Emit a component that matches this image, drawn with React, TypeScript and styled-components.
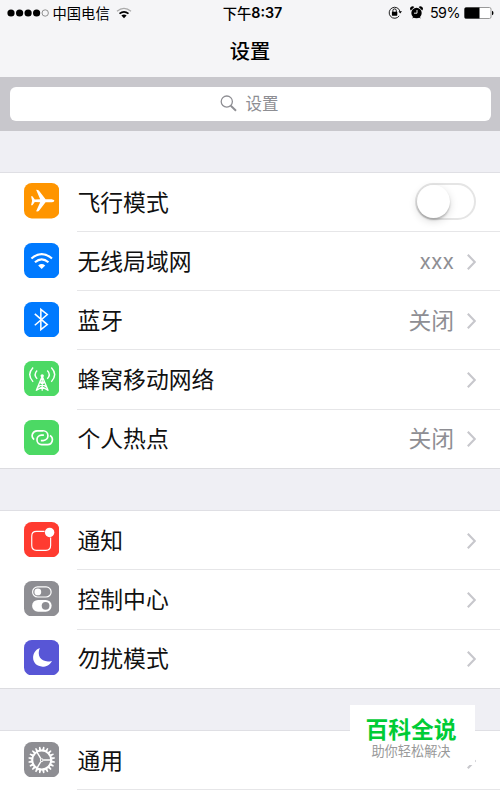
import React from "react";
import styled, { createGlobalStyle, css } from "styled-components";

const Global = createGlobalStyle`
  * { box-sizing: border-box; }
  html, body { margin: 0; padding: 0; }
  body { background: #efeff4; overflow: hidden; }
`;

const Screen = styled.main`
  position: relative;
  width: 500px;
  height: 790px;
  overflow: hidden;
  background: #efeff4;
  color: #111;
  font-family: "Noto Sans CJK SC", "Liberation Sans", sans-serif;
`;

const Header = styled.header`
  height: 77px;
  background: #f5f5f7;
`;

const StatusBar = styled.div`
  display: grid;
  grid-template-columns: 1fr auto 1fr;
  align-items: center;
  height: 25px;
  padding: 0 6px 0 7px;
  font-size: 14.3px;
  line-height: 25px;
  color: #000;
`;

const StatusSide = styled.div<{ $end?: boolean }>`
  display: flex;
  align-items: center;
  justify-content: ${(p) => (p.$end ? "flex-end" : "flex-start")};
  svg { display: block; flex: none; }
`;

const Carrier = styled.span`
  margin: 0 6px 0 3.5px;
`;

const Clock = styled.span`
  display: flex;
  padding-left: 4px;
  font-weight: 500;
`;

const Digits = styled.span`
  font-family: Inter, "Liberation Sans", sans-serif;
  font-weight: 600;
  font-size: 14.3px;
`;

const Indicators = styled.span`
  display: flex;
  align-items: center;
  gap: 8px;
`;

const Percent = styled.span`
  margin: 0 4px 0 7px;
  font-family: Inter, "Liberation Sans", sans-serif;
  font-size: 14.3px;
  letter-spacing: -0.5px;
`;

const Title = styled.h1`
  margin: 0;
  height: 51px;
  font-size: 20.3px;
  font-weight: 500;
  line-height: 51px;
  text-align: center;
  color: #000;
`;

const SearchBar = styled.div`
  height: 54px;
  padding: 10px 9.5px;
  background: #c8c7cc;
`;

const SearchField = styled.div`
  display: flex;
  align-items: center;
  justify-content: center;
  gap: 9px;
  height: 34px;
  padding: 0 2px 1px 0;
  border-radius: 6px;
  background: #fff;
  color: #8e8e93;
  font-size: 16.5px;
  line-height: 33px;
`;

const Group = styled.section<{ $gap: number }>`
  margin-top: ${(p) => p.$gap}px;
  background: #fff;
  box-shadow: 0 -1px 0 #dfdfe4;
`;

const Row = styled.div`
  display: flex;
  height: 59.15px;
  padding-left: 24px;
`;

const Tile = styled.svg`
  display: block;
  flex: none;
  width: 35.4px;
  height: 35.4px;
  margin: 10.4px 17.6px 0 0;
`;

const RowBody = styled.div<{ $last?: boolean }>`
  display: flex;
  flex: 1;
  align-items: center;
  padding: 0 24px 0 0.5px;
  border-bottom: 1px solid #e6e6e8;
  font-size: 22.8px;
  line-height: 34px;
  ${(p) =>
    p.$last &&
    css`
      border-bottom-color: #dcdce0;
      margin-left: -77px;
      padding-left: 77.5px;
    `}
`;

const Label = styled.span`
  flex: 1;
  margin-top: -1px;
`;

const Value = styled.span<{ $latin?: boolean }>`
  margin: -1px 13px 0 0;
  color: #8e8e93;
  ${(p) =>
    p.$latin &&
    css`
      font-family: Inter, "Liberation Sans", sans-serif;
      font-size: 21px;
      padding-top: 2px;
    `}
`;

const Chevron = styled.svg`
  display: block;
  flex: none;
  width: 9px;
  height: 16px;
  margin-top: 1px;
  fill: none;
  stroke: #c7c7cc;
  stroke-width: 2.1;
`;

const Track = styled.span`
  width: 61px;
  height: 37px;
  margin-top: -1px;
  border: 2px solid #e5e5e5;
  border-radius: 19px;
  background: #fff;
`;

const Knob = styled.span`
  display: block;
  width: 33px;
  height: 33px;
  border-radius: 50%;
  background: #fff;
  box-shadow: 0 2px 2px rgba(0, 0, 0, 0.2), 0 3px 9px rgba(0, 0, 0, 0.15);
`;

const Badge = styled.aside`
  position: absolute;
  left: 350px;
  top: 705px;
  width: 125px;
  height: 60px;
  padding-top: 11px;
  background: #fff;
  text-align: center;
`;

const BadgeName = styled.div`
  margin-left: -3px;
  height: 26px;
  color: #00cc36;
  font-size: 22.8px;
  font-weight: 700;
  line-height: 26px;
`;

const BadgeNote = styled.div`
  margin-left: -3px;
  color: #999;
  font-size: 13.2px;
  line-height: 18px;
`;

const tiles = {
  plane: {
    color: "#ff9500",
    art: (
      <path
        fill="#fff"
        d="M90 52.5C90 49.5 84 48 78 48H64L44 22Q42 20 36 20L48 48L32 49L25 39H21L24 52.5L21 66H25L32 56L48 57L36 84Q42 85 44 83L64 57H78C84 57 90 55.5 90 52.5Z"
      />
    ),
  },
  wifi: {
    color: "#007aff",
    art: (
      <g fill="none" stroke="#fff" strokeWidth="6.5">
        <path d="M22 46Q52.5 20 83 46" />
        <path d="M32.5 57Q52.5 40 72.5 57" />
        <path d="M42 66.5Q52.5 58 63 66.5L52.5 77Z" fill="#fff" stroke="none" />
      </g>
    ),
  },
  bluetooth: {
    color: "#007aff",
    art: (
      <path
        fill="none"
        stroke="#fff"
        strokeWidth="4.6"
        d="M32 35L69 67L50 82V22L69 37L32 69"
      />
    ),
  },
  cellular: {
    color: "#4cd964",
    art: (
      <g fill="none" stroke="#fff" strokeWidth="4.2">
        <path d="M54 45L36 88M54 45L72 88M54 42V88M46 63H62M48 64L67 78M60 64L41 78M36 87L54 77L72 87" strokeWidth="3.8" />
        <circle cx="54" cy="44" r="5" fill="#fff" stroke="none" />
        <path d="M39 28Q27 40 39 53M69 28Q81 40 69 53" />
        <path d="M27 19Q7 40 27 62M81 19Q101 40 81 62" />
      </g>
    ),
  },
  hotspot: {
    color: "#4cd964",
    art: (
      <g fill="none" stroke="#fff" strokeWidth="5">
        <path d="M30 58A14.5 14.5 0 0 1 39 32H56A14.5 14.5 0 0 1 57 61H50" />
        <path d="M77 46A14.5 14.5 0 0 1 70 73H53A14 14 0 0 1 52 45H59" />
      </g>
    ),
  },
  notifications: {
    color: "#ff3b30",
    art: (
      <g>
        <path
          fill="none"
          stroke="#fff"
          strokeWidth="3.4"
          d="M61 28H37Q23 28 23 42V70Q23 84 37 84H65Q79 84 79 70V46"
        />
        <circle cx="76" cy="31" r="14" fill="#fff" />
      </g>
    ),
  },
  control: {
    color: "#8e8e93",
    art: (
      <g>
        <rect x="25.5" y="17.5" width="55" height="30" rx="15" fill="none" stroke="#fff" strokeWidth="3.5" />
        <circle cx="41" cy="32.5" r="10" fill="#fff" />
        <rect x="24" y="56" width="58" height="35" rx="17.5" fill="#fff" />
        <circle cx="64" cy="73.5" r="11.5" fill="#8e8e93" />
      </g>
    ),
  },
  moon: {
    color: "#5856d6",
    art: <path fill="#fff" d="M47 24C36 49 54 70 83 62C76 75 66 79 55 79C38 79 27 67 27 53C27 40 34 29 47 24Z" />,
  },
  general: {
    color: "#8e8e93",
    art: (
      <g fill="none" stroke="#fff">
        {Array.from({ length: 20 }, (_, i) => (
          <path key={i} d="M48.8 25L50.6 14H54.4L56.2 25Z" fill="#fff" stroke="none" transform={`rotate(${i * 18 + 9} 52.5 53.5)`} />
        ))}
        <circle cx="52.5" cy="53.5" r="28" strokeWidth="6" />
        <circle cx="52.5" cy="53.5" r="4" strokeWidth="3" />
        <path d="M57 53.5H80M50 49L38 29M50 58L38 78" strokeWidth="4.2" />
      </g>
    ),
  },
};

type Item = {
  icon: keyof typeof tiles;
  label: string;
  value?: string;
  toggle?: boolean;
};

const groups: { gap: number; items: Item[] }[] = [
  {
    gap: 42,
    items: [
      { icon: "plane", label: "飞行模式", toggle: true },
      { icon: "wifi", label: "无线局域网", value: "xxx" },
      { icon: "bluetooth", label: "蓝牙", value: "关闭" },
      { icon: "cellular", label: "蜂窝移动网络" },
      { icon: "hotspot", label: "个人热点", value: "关闭" },
    ],
  },
  {
    gap: 42.6,
    items: [
      { icon: "notifications", label: "通知" },
      { icon: "control", label: "控制中心" },
      { icon: "moon", label: "勿扰模式" },
    ],
  },
  { gap: 42.6, items: [{ icon: "general", label: "通用" }] },
];

function SettingsRow({ item, last }: { item: Item; last: boolean }) {
  const tile = tiles[item.icon];
  return (
    <Row>
      <Tile viewBox="0 0 105 105">
        <rect width="105" height="105" rx="23" fill={tile.color} />
        {tile.art}
      </Tile>
      <RowBody $last={last}>
        <Label>{item.label}</Label>
        {item.value && <Value $latin={item.value === "xxx"}>{item.value}</Value>}
        {item.toggle ? (
          <Track>
            <Knob />
          </Track>
        ) : (
          <Chevron viewBox="0 0 9 16">
            <path d="M0.8 0.8L7.8 8L0.8 15.2" />
          </Chevron>
        )}
      </RowBody>
    </Row>
  );
}

export default function App() {
  return (
    <Screen>
      <Global />
      <Header>
        <StatusBar>
          <StatusSide>
            <svg width="42" height="8" viewBox="0 0 42 8">
              {[4, 12.6, 21.1, 29.6].map((x) => (
                <circle key={x} cx={x} cy="4" r="3.6" />
              ))}
              <circle cx="38.2" cy="4" r="3.2" fill="none" stroke="#777" strokeWidth="0.8" />
            </svg>
            <Carrier>中国电信</Carrier>
            <svg width="16" height="12" viewBox="0 0 16 12" fill="none" strokeWidth="1.7">
              <path d="M1 4.2Q8 -1.6 15 4.2" stroke="#aaa" strokeWidth="1.3" />
              <path d="M3.5 6.6Q8 3 12.5 6.6" stroke="#000" />
              <path d="M5.4 8.5Q8 6.6 10.6 8.5L8 11.2Z" fill="#000" />
            </svg>
          </StatusSide>
          <Clock>
            下午<Digits>8:37</Digits>
          </Clock>
          <StatusSide $end>
            <Indicators>
              <svg width="14" height="13" viewBox="0 0 14 13">
                <path d="M11.2 9.9A5.5 5.5 0 1 1 12 5.4" fill="none" stroke="#222" strokeWidth="1" />
                <path d="M10.5 5.2H14L12.2 7.6Z" />
                <rect x="3.9" y="5.7" width="5.4" height="4" rx="0.4" />
                <path d="M4.9 6V4.6a1.7 1.7 0 0 1 3.4 0V6" fill="none" stroke="#111" strokeWidth="1" />
              </svg>
              <svg width="13" height="13" viewBox="0 0 13 13">
                <circle cx="6.5" cy="7" r="5.2" />
                <path d="M0.8 4.4A2.4 2.4 0 0 1 4.3 1.1ZM12.2 4.4A2.4 2.4 0 0 0 8.7 1.1ZM2 12.6L3.6 10.5L4.7 11.3ZM11 12.6L9.4 10.5L8.3 11.3Z" />
                <path d="M7 4V7.2H4" fill="none" stroke="#fff" strokeWidth="0.9" />
              </svg>
            </Indicators>
            <Percent>59%</Percent>
            <svg width="30" height="12" viewBox="0 0 30 12">
              <rect x="0.5" y="0.5" width="26.5" height="11" rx="1.6" fill="#fff" stroke="#999" />
              <path d="M2 0.5H15.5V11.5H2Q0.5 11.5 0.5 10V2Q0.5 0.5 2 0.5Z" />
              <path d="M28 3.8Q29.5 4.2 29.5 6T28 8.2Z" />
            </svg>
          </StatusSide>
        </StatusBar>
        <Title>设置</Title>
      </Header>
      <SearchBar>
        <SearchField>
          <svg width="17" height="17" viewBox="0 0 17 17" fill="none" stroke="#8e8e93">
            <circle cx="6.8" cy="6.6" r="5.6" strokeWidth="1.3" />
            <path d="M10.8 10.7L16 15.7" strokeWidth="1.9" />
          </svg>
          设置
        </SearchField>
      </SearchBar>
      {groups.map((group, g) => (
        <Group key={g} $gap={group.gap}>
          {group.items.map((item, i) => (
            <SettingsRow key={item.label} item={item} last={group.items.length > 1 && i === group.items.length - 1} />
          ))}
        </Group>
      ))}
      <Badge>
        <BadgeName>百科全说</BadgeName>
        <BadgeNote>助你轻松解决</BadgeNote>
      </Badge>
    </Screen>
  );
}
